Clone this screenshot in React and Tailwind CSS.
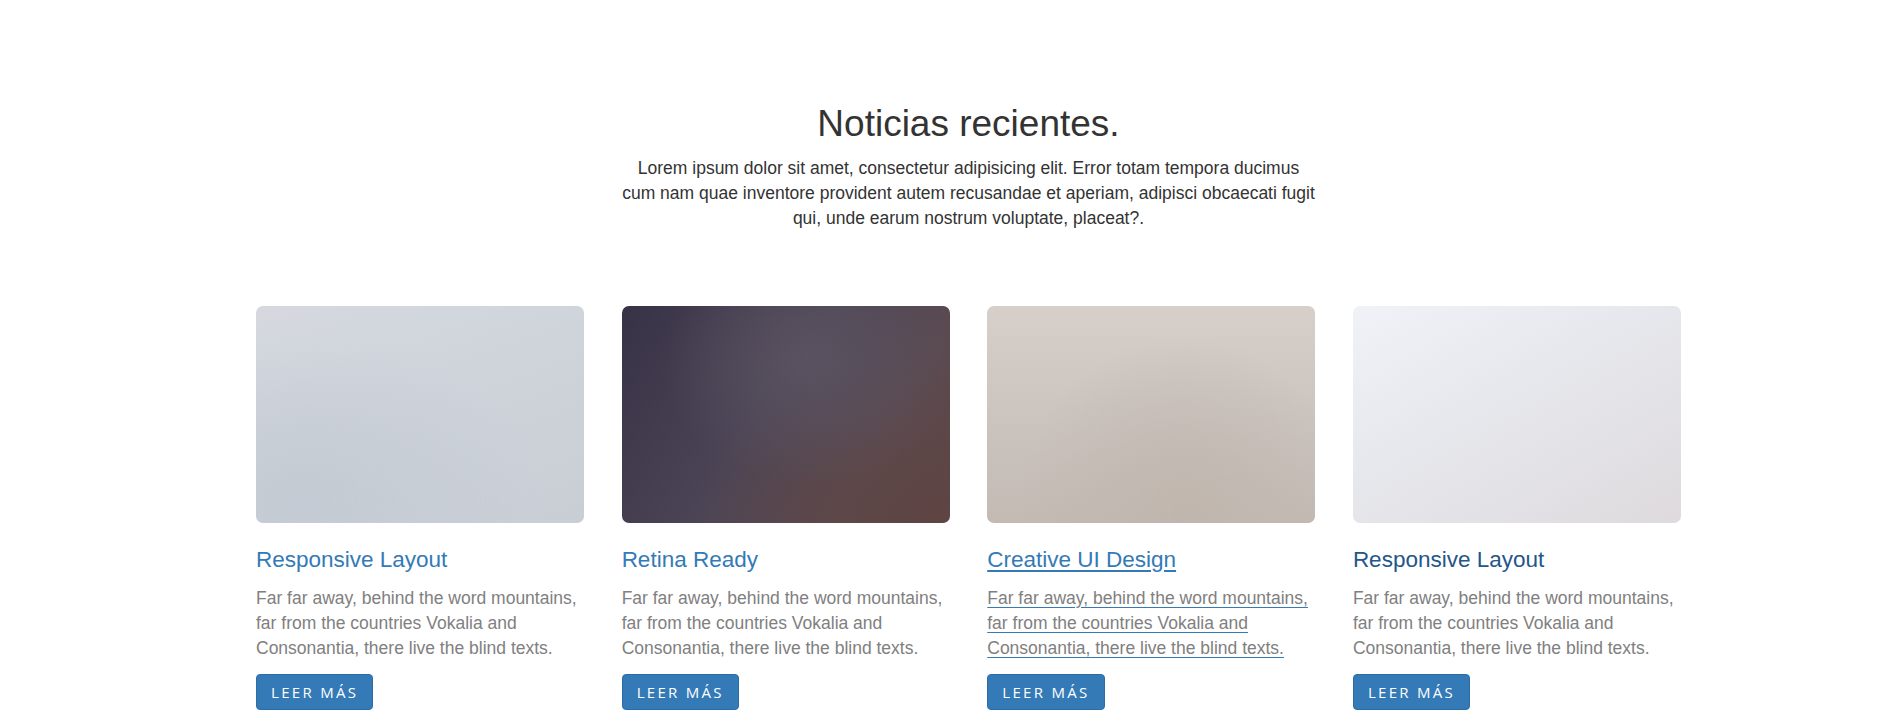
import React from 'react';

const POSTS = [
  {
    title: 'Responsive Layout',
    bg: 'bg-[radial-gradient(ellipse_at_15%_90%,#c4cad3_0%,transparent_60%),linear-gradient(160deg,#d5d9df_0%,#ced3da_50%,#c9ced5_100%)]',
    titleClass: 'text-[#337ab7]',
    textClass: 'text-[#808080]',
  },
  {
    title: 'Retina Ready',
    bg: 'bg-[radial-gradient(ellipse_at_58%_25%,#5a5260_0%,transparent_55%),radial-gradient(ellipse_at_95%_95%,#5e4544_0%,transparent_55%),linear-gradient(120deg,#383247_0%,#4c4556_45%,#5b4a50_75%,#5d4545_100%)]',
    titleClass: 'text-[#337ab7]',
    textClass: 'text-[#808080]',
  },
  {
    title: 'Creative UI Design',
    bg: 'bg-[radial-gradient(ellipse_at_60%_100%,#c0b6ae_0%,transparent_60%),linear-gradient(180deg,#d6cfca_0%,#cbc4bf_50%,#c3bab3_100%)]',
    titleClass: 'text-[#337ab7] underline decoration-[#337ab7] underline-offset-[3px]',
    textClass: 'text-[#808080] underline decoration-[#337ab7] underline-offset-[3px]',
  },
  {
    title: 'Responsive Layout',
    bg: 'bg-[linear-gradient(150deg,#f0f2f8_0%,#e6e7ec_45%,#dedadd_100%)]',
    titleClass: 'text-[#23568a]',
    textClass: 'text-[#808080]',
  },
];

function PostCard({ post }) {
  return (
    <div className="flex flex-col items-start">
      <div className={`h-[217px] w-full rounded-[7px] ${post.bg}`} />
      <h3 className={`mt-[25px] text-[22.5px] leading-[24.75px] ${post.titleClass}`}>{post.title}</h3>
      <p className={`mt-[12.5px] text-[17.5px] leading-[25px] ${post.textClass}`}>
        Far far away, behind the word mountains, far from the countries Vokalia and Consonantia, there live the blind texts.
      </p>
      <button
        type="button"
        className="mt-[13.5px] flex h-[36px] items-center rounded-[4px] border border-[#2e6da4] bg-[#337ab7] px-[14px] text-[15px] uppercase tracking-[2.3px] text-white"
        style={{ fontFamily: '"Open Sans", sans-serif' }}
      >
        Leer más
      </button>
    </div>
  );
}

export default function App() {
  return (
    <div className="min-h-screen bg-white pl-[40px]" style={{ fontFamily: '"Liberation Sans", Arial, sans-serif' }}>
      <div className="mx-auto w-[1425px] pt-[102.5px] pb-[10px]">
        {/* Heading */}
        <div className="flex flex-col items-center">
          <h2 className="text-center text-[37px] leading-[41.25px] text-[#333]">Noticias recientes.</h2>
          <p className="mt-[12.5px] w-[694px] text-center text-[17.5px] leading-[25px] text-[#333]">
            Lorem ipsum dolor sit amet, consectetur adipisicing elit. Error totam tempora ducimus cum nam quae inventore
            provident autem recusandae et aperiam, adipisci obcaecati fugit qui, unde earum nostrum voluptate, placeat?.
          </p>
        </div>

        {/* Cards */}
        <div className="mt-[75px] grid grid-cols-4 gap-x-[37.5px]">
          {POSTS.map((p, i) => (
            <PostCard key={i} post={p} />
          ))}
        </div>
      </div>
    </div>
  );
}
